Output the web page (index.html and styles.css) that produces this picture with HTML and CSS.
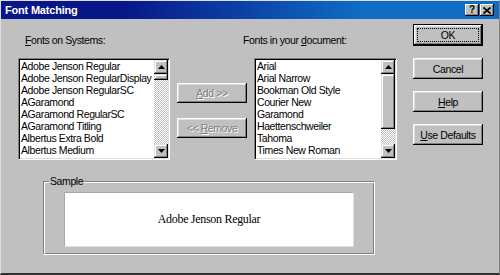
FILE: index.html
```html
<!DOCTYPE html>
<html lang="en">

<head>
    <meta charset="UTF-8">
    <meta name="viewport" content="width=device-width, initial-scale=1.0">
    <title>Font Matching</title>
    <link rel="stylesheet" href="styles.css">
</head>

<body>

    <div class="window">
        <div class="titlebar">
            <span class="title">Font Matching</span>
            <div class="title-buttons">
                <button class="title-btn help-btn">?</button>
                <button class="title-btn close-btn">
                    <svg width="8" height="7" viewBox="0 0 8 7">
                        <path d="M0.5 0.5l7 6M7.5 0.5l-7 6" stroke="#000" stroke-width="1.7" fill="none" />
                    </svg>
                </button>
            </div>
        </div>

        <div class="dialog-body">
            <div class="top-row">
                <div class="fonts-area">
                    <div class="labels">
                        <span class="label-system"><u>F</u>onts on Systems:</span>
                        <span>Fonts in your <u>d</u>ocument:</span>
                    </div>

                    <div class="lists">
                        <div class="listbox listbox-system">
                            <ul class="items">
                                <li>Adobe Jenson Regular</li>
                                <li>Adobe Jenson RegularDisplay</li>
                                <li>Adobe Jenson RegularSC</li>
                                <li>AGaramond</li>
                                <li>AGaramond RegularSC</li>
                                <li>AGaramond Titling</li>
                                <li>Albertus Extra Bold</li>
                                <li>Albertus Medium</li>
                                <li>Arial Rounded MT Bold</li>
                            </ul>
                            <div class="scrollbar">
                                <div class="sb-btn">
                                    <svg width="7" height="4" viewBox="0 0 7 4"><path d="M3.5 0L7 4H0z" /></svg>
                                </div>
                                <div class="sb-thumb thumb-small"></div>
                                <div class="sb-track"></div>
                                <div class="sb-btn">
                                    <svg width="7" height="4" viewBox="0 0 7 4"><path d="M0 0h7L3.5 4z" /></svg>
                                </div>
                            </div>
                        </div>

                        <div class="move-buttons">
                            <button class="btn btn-move" disabled><span><u>A</u>dd &gt;&gt;</span></button>
                            <button class="btn btn-move" disabled><span>&lt;&lt; <u>R</u>emove</span></button>
                        </div>

                        <div class="listbox listbox-doc">
                            <ul class="items">
                                <li>Arial</li>
                                <li>Arial Narrow</li>
                                <li>Bookman Old Style</li>
                                <li>Courier New</li>
                                <li>Garamond</li>
                                <li>Haettenschweiler</li>
                                <li>Tahoma</li>
                                <li>Times New Roman</li>
                                <li>Zapf Humanist Demi</li>
                            </ul>
                            <div class="scrollbar">
                                <div class="sb-btn">
                                    <svg width="7" height="4" viewBox="0 0 7 4"><path d="M3.5 0L7 4H0z" /></svg>
                                </div>
                                <div class="sb-thumb thumb-large"></div>
                                <div class="sb-track"></div>
                                <div class="sb-btn">
                                    <svg width="7" height="4" viewBox="0 0 7 4"><path d="M0 0h7L3.5 4z" /></svg>
                                </div>
                            </div>
                        </div>
                    </div>
                </div>

                <div class="side-buttons">
                    <button class="btn btn-default"><span class="focus">OK</span></button>
                    <button class="btn">Cancel</button>
                    <button class="btn"><span><u>H</u>elp</span></button>
                    <button class="btn"><span><u>U</u>se Defaults</span></button>
                </div>
            </div>

            <div class="sample">
                <span class="sample-label">Sample</span>
                <div class="sample-box">Adobe Jenson Regular</div>
            </div>
        </div>
    </div>

</body>

</html>
```

FILE: styles.css
```css
* {
    margin: 0;
    padding: 0;
    box-sizing: border-box;
}

body {
    width: 500px;
    height: 275px;
    background: #c0c0c0;
    font-family: "Liberation Sans", Arial, sans-serif;
    font-size: 10.5px;
    letter-spacing: -0.4px;
    color: #000;
    overflow: hidden;
}

u {
    text-decoration: underline;
    text-underline-offset: 1px;
}

.window {
    width: 500px;
    height: 275px;
    background: #c0c0c0;
    border-top: 1px solid #dfdfdf;
    border-left: 1px solid #dfdfdf;
    border-right: 1px solid #808080;
    border-bottom: 2px solid #303030;
}

/* title bar */
.titlebar {
    height: 18px;
    display: flex;
    align-items: center;
    justify-content: space-between;
    padding: 0 5px 0 4px;
    background: linear-gradient(to right, #08168a 0, #08168a 24%, #0e6cc4 72%, #0e6cc4 100%);
}

.title {
    color: #fff;
    font-weight: bold;
    font-size: 11px;
    letter-spacing: -0.2px;
}

.title-buttons {
    display: flex;
    gap: 1px;
}

.title-btn {
    width: 14px;
    height: 12px;
    display: flex;
    align-items: center;
    justify-content: center;
    border: none;
    background: #c0c0c0;
    font-family: "Liberation Sans", Arial, sans-serif;
    font-weight: bold;
    font-size: 10px;
    line-height: 12px;
    color: #000;
    box-shadow: inset -1px -1px #000, inset 1px 1px #fff, inset -2px -2px #808080;
}

/* body */
.dialog-body {
    padding: 5px 0 0 17px;
}

.top-row {
    display: flex;
    gap: 16px;
}

.fonts-area {
    width: 379px;
}

.labels {
    display: flex;
    margin-top: 10px;
    padding-left: 7px;
    line-height: 13px;
}

.label-system {
    width: 218px;
}

.lists {
    display: flex;
    margin-top: 11px;
}

.listbox {
    display: flex;
    height: 102px;
    background: #fff;
    border: 1px solid;
    border-color: #808080 #fff #fff #808080;
    box-shadow: inset 1px 1px #000, inset -1px -1px #dfdfdf;
    padding: 1px;
}

.listbox-system {
    width: 152px;
}

.listbox-doc {
    width: 143px;
}

.items {
    flex: 1;
    list-style: none;
    overflow: hidden;
    white-space: nowrap;
    line-height: 12px;
    padding-left: 1px;
}

.scrollbar {
    width: 14px;
    display: flex;
    flex-direction: column;
}

.sb-btn,
.sb-thumb {
    background: #c0c0c0;
    box-shadow: inset -1px -1px #000, inset 1px 1px #dfdfdf, inset -2px -2px #808080, inset 2px 2px #fff;
}

.sb-btn {
    height: 14px;
    display: flex;
    align-items: center;
    justify-content: center;
}

.thumb-small {
    height: 6px;
}

.thumb-large {
    height: 55px;
}

.sb-track {
    flex: 1;
    background: repeating-conic-gradient(#c0c0c0 0 25%, #fff 0 50%) 0 0 / 2px 2px;
}

/* buttons */
.btn {
    display: flex;
    align-items: center;
    justify-content: center;
    width: 70px;
    height: 21px;
    border: none;
    background: #c0c0c0;
    font-family: "Liberation Sans", Arial, sans-serif;
    font-size: 10.5px;
    letter-spacing: -0.4px;
    color: #000;
    white-space: pre;
    box-shadow: inset -1px -1px #000, inset 1px 1px #fff, inset -2px -2px #808080, inset 2px 2px #dfdfdf;
}

.btn:disabled {
    color: #808080;
    text-shadow: 1px 1px 0 #fff;
}

.move-buttons {
    display: flex;
    flex-direction: column;
    gap: 15px;
    padding: 25px 7px 0 7px;
}

.btn-move {
    height: 20px;
}

.side-buttons {
    display: flex;
    flex-direction: column;
    gap: 12px;
}

.btn-default {
    height: 22px;
    padding: 4px;
    box-shadow: inset 0 0 0 1px #000, inset -2px -2px #000, inset 2px 2px #fff, inset -3px -3px #808080, inset 3px 3px #dfdfdf;
}

.focus {
    flex: 1;
    align-self: stretch;
    display: flex;
    align-items: center;
    justify-content: center;
    border: 1px dotted #000;
}

/* sample group */
.sample {
    position: relative;
    width: 332px;
    height: 74px;
    margin: 21px 0 0 25px;
    padding: 10px 0 0 20px;
    border: 1px solid;
    border-color: #808080 #fff #fff #808080;
    box-shadow: inset 1px 1px #fff, inset -1px -1px #808080;
}

.sample-label {
    position: absolute;
    top: -7px;
    left: 5px;
    padding: 0 1px;
    line-height: 13px;
    background: #c0c0c0;
}

.sample-box {
    width: 290px;
    height: 55px;
    display: flex;
    align-items: center;
    justify-content: center;
    background: #fff;
    border: 1px solid;
    border-color: #a8a8a8 #e0e0e0 #e0e0e0 #a8a8a8;
    font-family: "Liberation Serif", "Times New Roman", serif;
    font-size: 12px;
    letter-spacing: -0.3px;
}
```
